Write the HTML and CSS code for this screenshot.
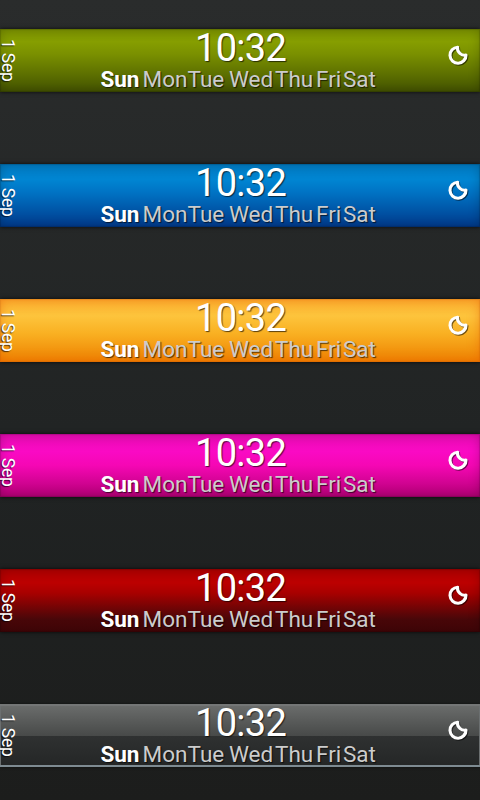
FILE: index.html
```
<!DOCTYPE html>
<html lang="en">
<head>
<meta charset="UTF-8">
<meta name="viewport" content="width=device-width, initial-scale=1.0">
<title>Clock Bars</title>
<link rel="stylesheet" href="styles.css">
</head>
<body>
<svg class="defs" width="0" height="0">
    <symbol id="moon" viewBox="0 0 20 20">
        <path d="M9.6 2.2A8 8 0 1 0 18 10C13.9 11.4 8.7 6.7 9.6 2.2Z" fill="none" stroke="currentColor" stroke-width="3.1" stroke-linejoin="round"/>
    </symbol>
</svg>
<div id="bars"></div>

<script>
const themes = ['green', 'blue', 'orange', 'pink', 'red', 'glass'];
const days = ['Sun', 'Mon', 'Tue', 'Wed', 'Thu', 'Fri', 'Sat'];
const today = 'Sun';

const dayList = days.map(day => `<span class="day${day === today ? ' today' : ''}">${day}</span>`).join('');

document.getElementById('bars').innerHTML = themes.map(theme => `
    <div class="bar ${theme}">
        <div class="date">1 Sep</div>
        <div class="center">
            <div class="time">10:32</div>
            <div class="days">${dayList}</div>
        </div>
        <svg class="moon"><use href="#moon"/></svg>
    </div>`).join('');
</script>
</body>
</html>
```
FILE: styles.css
```
body {
    margin: 0;
    height: 800px;
    overflow: hidden;
    font-family: Roboto, sans-serif;
    color: #fff;
    background: linear-gradient(#2a2c2c, #202323 60%, #1c1d1c);
}
.defs {
    display: block;
}
#bars {
    display: flex;
    flex-direction: column;
    gap: 72px;
    padding-top: 29px;
}
.bar {
    display: grid;
    grid-template-columns: 100.5px 277px 1fr;
    height: 63px;
    text-shadow: 1px 1px 1px rgba(0, 0, 0, 0.65);
    box-shadow: 0 0 4px rgba(0, 0, 0, 0.8), inset 0 0 12px rgba(0, 0, 0, 0.22), inset 0 0 1px 1px rgba(0, 0, 0, 0.15);
}
.green {
    background: linear-gradient(#7d9400, #869e00 20%, #7a9000 40%, #435300);
}
.blue {
    background: linear-gradient(#007cc4, #0085d2 25%, #0073c4 45%, #003a8c);
}
.orange {
    background: linear-gradient(#fbb030, #fdc43c 27%, #f9b022 55%, #ee8100);
    box-shadow: 0 0 4px rgba(0, 0, 0, 0.8), inset 0 0 12px rgba(235, 90, 0, 0.5), inset 0 0 1px 1px rgba(120, 50, 0, 0.15);
}
.pink {
    background: linear-gradient(#e80cb4, #fa0ac4 28%, #f507b4 50%, #b40076);
}
.red {
    background: linear-gradient(#b20000, #bc0000 22%, #a80000 38%, #480709 80%, #420507);
}
.glass {
    background: linear-gradient(#6c6e6d, #484a49 50%, #2f3131 51%, #242626);
    box-shadow: 0 0 3px rgba(0, 0, 0, 0.5), inset 0 2px #747676, inset 0 -2px #7e8b92, inset 0 0 0 1px #6b6f70;
}
.date {
    writing-mode: vertical-rl;
    justify-self: start;
    font-size: 17.5px;
    line-height: 20px;
    letter-spacing: -0.2px;
    padding-top: 10px;
    margin-left: -2px;
}
.time {
    font-size: 38px;
    line-height: 38px;
    letter-spacing: -0.7px;
    padding-left: 94.5px;
}
.days {
    display: grid;
    grid-template-columns: 42px 45px 41.5px 46px 41px 27px 34.5px;
    font-size: 22.5px;
    line-height: 25px;
    color: #ccc;
}
.today {
    color: #fff;
    font-weight: bold;
    letter-spacing: -0.1px;
}
.moon {
    width: 20px;
    height: 20px;
    margin: 16px 0 0 70.5px;
    filter: drop-shadow(1px 1px 0 rgba(0, 0, 0, 0.55));
}
```
